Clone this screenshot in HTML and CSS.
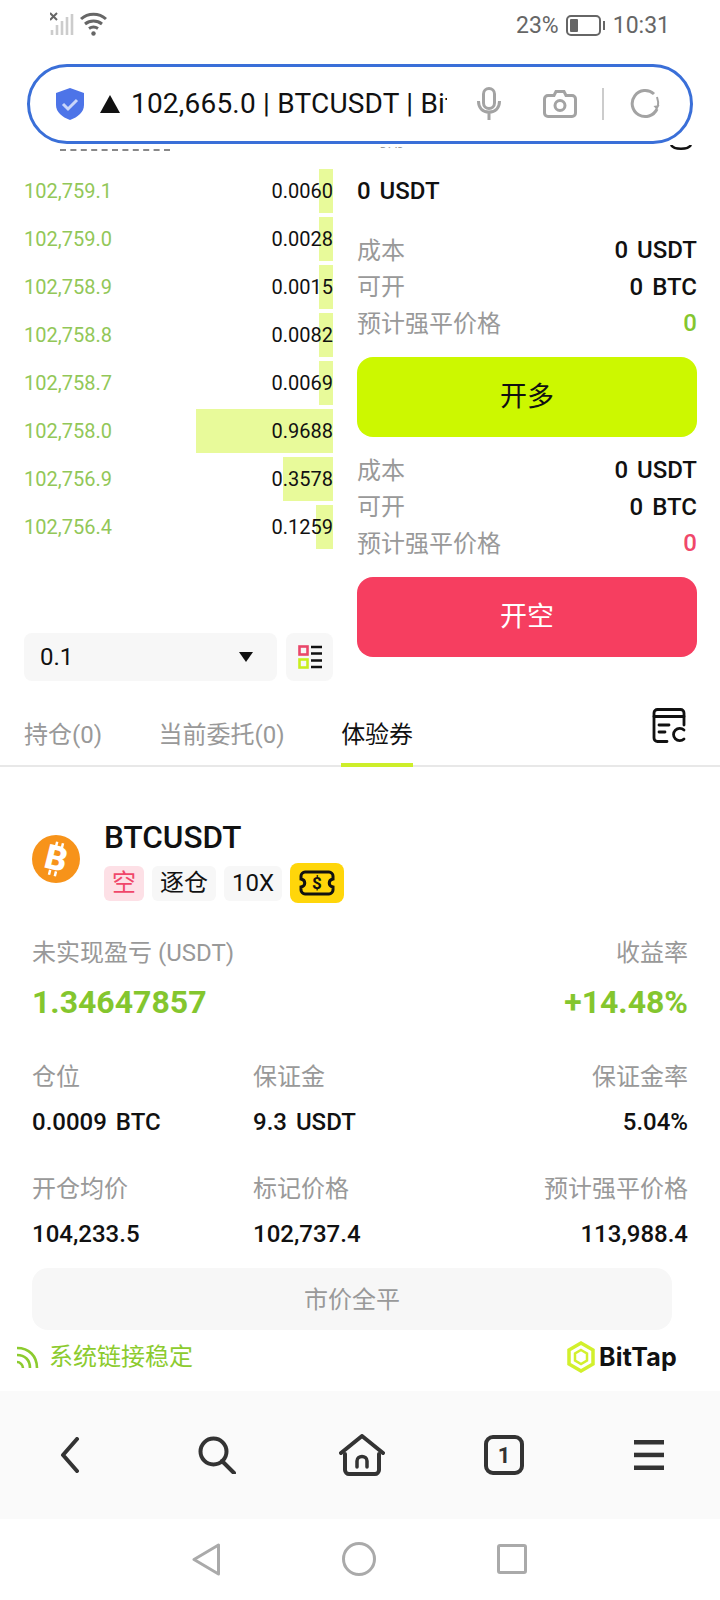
FILE: index.html
```html
<!DOCTYPE html>
<html>
<head>
<meta charset="utf-8">
<title>BTCUSDT</title>
<link rel="stylesheet" href="styles.css">
</head>
<body>
<div class="status">
  <div class="status-left">
    <svg width="24" height="24" viewBox="0 0 24 24" fill="none"><path d="M0 1l7 7M7 1L0 8" stroke="#666" stroke-width="2"/><path d="M2 23v-5M7 23V13M12 23V9M17 23V5M22 23V2" stroke="#ccc" stroke-width="2.600"/></svg>
    <svg width="27" height="24" viewBox="0 0 27 24" fill="none" stroke="#666" stroke-width="3"><path d="M1 7c7-6.500 18-6.500 25 0"/><path d="M5 12c5-4 12-4 17 0"/><path d="M9 16.500c3-2 6-2 9 0"/><circle cx="13.500" cy="21.500" r="2.200" fill="#666" stroke="none"/></svg>
  </div>
  <div class="status-right">
    <span>23%</span>
    <span class="battery"><span class="battery-fill"></span></span>
    <span class="battery-nub"></span>
    <span class="clock">10:31</span>
  </div>
</div>

<div class="urlbar">
  <svg class="shield" width="32" height="32" viewBox="0 0 32 32"><path d="M16 0l14 5v12c0 7-6 12-14 15C8 29 2 24 2 17V5z" fill="#4d74e8"/><path d="M9 16l5 5 9-9" fill="none" stroke="#c9d6fa" stroke-width="3"/></svg>
  <span class="url-tri"></span>
  <div class="url-text">102,665.0 | BTCUSDT | Bittap</div>
  <svg class="mic" width="24" height="34" viewBox="0 0 24 34" fill="none" stroke="#a3a3a3" stroke-width="3"><rect x="6.500" y="1.500" width="11" height="20" rx="5.500"/><path d="M1.500 14c0 7 4 11 10.500 11s10.500-4 10.500-11M12 25v8"/></svg>
  <svg class="cam" width="34" height="28" viewBox="0 0 34 28" fill="none" stroke="#a3a3a3" stroke-width="3"><path d="M5 5.500h6l2-4h8l2 4h6c2 0 3.500 1.500 3.500 3.500v14c0 2-1.500 3.500-3.500 3.500H5c-2 0-3.500-1.500-3.500-3.500V9c0-2 1.500-3.500 3.500-3.500z"/><circle cx="17" cy="15.500" r="5"/></svg>
  <span class="url-sep"></span>
  <svg class="reload" width="30" height="30" viewBox="0 0 30 30" fill="none" stroke="#a3a3a3" stroke-width="3"><path d="M24 5A13 13 0 1 0 27 20"/><path d="M27 8c1 3 1.500 6 1 9" stroke-width="2"/><path d="M29.500 16l-2.500 5-3.500-4z" fill="#a3a3a3" stroke="none"/></svg>
</div>

<div class="clipped">
  <span class="clipped-dash"></span>
  <span class="clipped-text"><span>可用</span></span>
  <svg class="clipped-arc" width="22" height="6" viewBox="0 0 22 6"><path d="M1 0c3 5 17 5 20 0" fill="none" stroke="#111" stroke-width="2.500"/></svg>
</div>

<div class="trade">
  <div class="book">
    <div class="book-row"><span class="bar" style="width:14px"></span><span class="price">102,759.1</span><span class="qty">0.0060</span></div>
    <div class="book-row"><span class="bar" style="width:14px"></span><span class="price">102,759.0</span><span class="qty">0.0028</span></div>
    <div class="book-row"><span class="bar" style="width:14px"></span><span class="price">102,758.9</span><span class="qty">0.0015</span></div>
    <div class="book-row"><span class="bar" style="width:14px"></span><span class="price">102,758.8</span><span class="qty">0.0082</span></div>
    <div class="book-row"><span class="bar" style="width:14px"></span><span class="price">102,758.7</span><span class="qty">0.0069</span></div>
    <div class="book-row"><span class="bar" style="width:137px"></span><span class="price">102,758.0</span><span class="qty">0.9688</span></div>
    <div class="book-row"><span class="bar" style="width:50px"></span><span class="price">102,756.9</span><span class="qty">0.3578</span></div>
    <div class="book-row"><span class="bar" style="width:17px"></span><span class="price">102,756.4</span><span class="qty">0.1259</span></div>
    <div class="depth">
      <div class="depth-select"><span>0.1</span><span class="caret"></span></div>
      <div class="depth-mode">
        <svg width="24" height="24" viewBox="0 0 24 24"><rect x="1.500" y="1.500" width="8" height="8" fill="none" stroke="#e9476a" stroke-width="2.600"/><rect x="1.500" y="14.500" width="8" height="8" fill="none" stroke="#c8ee1e" stroke-width="2.600"/><path d="M13 2h11M13 8.500h11M13 15.500h11M13 22h11" stroke="#111" stroke-width="2.600"/></svg>
      </div>
    </div>
  </div>
  <div class="order">
    <div class="avail">0 USDT</div>
    <div class="info first"><span>成本</span><b>0 USDT</b></div>
    <div class="info"><span>可开</span><b>0 BTC</b></div>
    <div class="info"><span>预计强平价格</span><b class="up">0</b></div>
    <div class="btn btn-long">开多</div>
    <div class="info first"><span>成本</span><b>0 USDT</b></div>
    <div class="info"><span>可开</span><b>0 BTC</b></div>
    <div class="info"><span>预计强平价格</span><b class="down">0</b></div>
    <div class="btn btn-short">开空</div>
  </div>
</div>

<div class="tabs">
  <div class="tab">持仓(0)</div>
  <div class="tab">当前委托(0)</div>
  <div class="tab active">体验券</div>
  <svg class="ledger" width="34" height="35" viewBox="0 0 34 35" fill="none" stroke="#111" stroke-width="2.800" stroke-linecap="round"><path d="M32 17V5c0-2-1.500-3.500-3.500-3.500h-23C3.500 1.500 2 3 2 5v25c0 2 1.500 3.500 3.500 3.500H15"/><path d="M2 8.500h30M7 17h10M7 24h6"/><path d="M32 22a6.200 6.200 0 1 0 0 9"/></svg>
</div>

<div class="pos">
  <div class="pos-head">
    <svg class="coin" width="48" height="48" viewBox="0 0 48 48"><circle cx="24" cy="24" r="24" fill="#f7931a"/><text x="24" y="35" class="coin-b" transform="rotate(14 24 24)">B</text><path d="M21 7v5M27 7v5M21 36v5M27 36v5" stroke="#fff" stroke-width="2.500" transform="rotate(14 24 24)"/></svg>
    <div>
      <div class="pos-name">BTCUSDT</div>
      <div class="tags">
        <span class="tag tag-short">空</span>
        <span class="tag">逐仓</span>
        <span class="tag">10X</span>
        <span class="coupon">
          <svg width="36" height="26" viewBox="0 0 36 26" fill="none" stroke="#111" stroke-width="3"><path d="M6 2h24c2 0 4 2 4 4v3c-5 1-5 7 0 8v3c0 2-2 4-4 4H6c-2 0-4-2-4-4v-3c5-1 5-7 0-8V6c0-2 2-4 4-4z"/><text x="18" y="19" class="coupon-sign">$</text></svg>
        </span>
      </div>
    </div>
  </div>

  <div class="pnl-labels"><span>未实现盈亏 (USDT)</span><span>收益率</span></div>
  <div class="pnl-values"><span>1.34647857</span><span>+14.48%</span></div>

  <div class="stats">
    <div class="stat"><span>仓位</span><b>0.0009 BTC</b></div>
    <div class="stat"><span>保证金</span><b>9.3 USDT</b></div>
    <div class="stat end"><span>保证金率</span><b>5.04%</b></div>
    <div class="stat"><span>开仓均价</span><b>104,233.5</b></div>
    <div class="stat"><span>标记价格</span><b>102,737.4</b></div>
    <div class="stat end"><span>预计强平价格</span><b>113,988.4</b></div>
  </div>

  <div class="close-all">市价全平</div>
</div>

<div class="netline">
  <div class="net">
    <svg width="22" height="22" viewBox="0 0 22 22" fill="none" stroke="#8ccb2e" stroke-width="2.600"><path d="M0 2c12 0 20 8 20 20M0 9c8 0 13 5 13 13M0 16c3 0 6 3 6 6"/></svg>
    <span>系统链接稳定</span>
  </div>
  <div class="brand">
    <svg width="28" height="32" viewBox="0 0 28 32" fill="none" stroke="#d2f02c" stroke-width="3.500"><path d="M14 2l12 7v14l-12 7-12-7V9z"/><path d="M14 9l6 3.500v7L14 23l-6-3.500v-7z" stroke-width="2.500"/></svg>
    <span>BitTap</span>
  </div>
</div>

<div class="browser">
  <svg class="nav-back" width="20" height="36" viewBox="0 0 20 36" fill="none" stroke="#333" stroke-width="4" stroke-linecap="round" stroke-linejoin="round"><path d="M17 2L3 18l14 16"/></svg>
  <svg class="nav-search" width="38" height="38" viewBox="0 0 38 38" fill="none" stroke="#333" stroke-width="4"><circle cx="15.500" cy="15.500" r="13"/><path d="M24 25l12 12" stroke-linecap="round"/></svg>
  <svg class="nav-home" width="46" height="42" viewBox="0 0 46 42" fill="none" stroke="#333" stroke-width="4" stroke-linecap="round" stroke-linejoin="round"><path d="M2 19L23 2l21 17"/><path d="M6 20v16c0 2 2 4 4 4h26c2 0 4-2 4-4V20"/><path d="M18 33v-6c0-6 10-6 10 0v6" stroke-width="3.500"/></svg>
  <span class="tab-count">1</span>
  <svg class="nav-menu" width="30" height="30" viewBox="0 0 30 30" fill="#333"><rect width="30" height="4.500"/><rect y="12.700" width="30" height="4.500"/><rect y="25.500" width="30" height="4.500"/></svg>
</div>

<div class="sysnav">
  <svg width="28" height="33" viewBox="0 0 28 33" fill="none" stroke="#aaa" stroke-width="3" stroke-linejoin="round"><path d="M26.500 2v29L2 16.500z"/></svg>
  <svg width="34" height="34" viewBox="0 0 34 34" fill="none" stroke="#aaa" stroke-width="3"><circle cx="17" cy="17" r="15.500"/></svg>
  <svg width="30" height="30" viewBox="0 0 30 30" fill="none" stroke="#aaa" stroke-width="3" stroke-linejoin="round"><rect x="1.500" y="1.500" width="27" height="27" rx="1.500"/></svg>
</div>
</body>
</html>
```

FILE: styles.css
```css
* {
    box-sizing: border-box;
}

html, body {
    margin: 0;
    padding: 0;
}

body {
    width: 720px;
    height: 1600px;
    overflow: hidden;
    background: #fff;
    color: #111;
    font-family: Roboto, "Noto Sans CJK SC", sans-serif;
}

b {
    font-weight: 500;
    word-spacing: 3px;
}

/* status bar */
.status {
    height: 64px;
    padding: 12px 50px 0 50px;
    display: flex;
    justify-content: space-between;
}

.status-left {
    display: flex;
    gap: 6px;
    height: 24px;
}

.status-right {
    display: flex;
    align-items: center;
    height: 26px;
    font-size: 23px;
    color: #666;
}

.battery {
    margin-left: 7px;
    width: 35px;
    height: 21px;
    border: 2px solid #666;
    border-radius: 5px;
    padding: 2px;
}

.battery-fill {
    display: block;
    width: 8px;
    height: 100%;
    background: #666;
    border-radius: 1px;
}

.battery-nub {
    margin-left: 2px;
    width: 2px;
    height: 9px;
    background: #666;
}

.clock {
    margin-left: 8px;
}

/* address bar */
.urlbar {
    margin: 0 27px;
    height: 80px;
    border: 3px solid #3a6fd8;
    border-radius: 40px;
    display: flex;
    align-items: center;
    padding-left: 24px;
}

.shield {
    flex: none;
}

.url-tri {
    flex: none;
    margin-left: 14px;
    width: 0;
    height: 0;
    border-left: 10.500px solid transparent;
    border-right: 10.500px solid transparent;
    border-bottom: 18px solid #111;
}

.url-text {
    margin-left: 11px;
    width: 316px;
    overflow: hidden;
    white-space: nowrap;
    font-size: 28px;
    letter-spacing: 0.2px;
    line-height: 36px;
    flex: none;
}

.mic {
    flex: none;
    margin-left: 30px;
}

.cam {
    flex: none;
    margin-left: 42px;
}

.url-sep {
    flex: none;
    margin-left: 25px;
    width: 2px;
    height: 32px;
    background: #ccc;
}

.reload {
    flex: none;
    margin-left: 26px;
}

/* scrolled-away row under the bar */
.clipped {
    height: 9px;
    position: relative;
    overflow: hidden;
}

.clipped-dash {
    position: absolute;
    left: 60px;
    top: 5px;
    width: 110px;
    border-top: 2px dashed #888;
}

.clipped-text {
    position: absolute;
    left: 372px;
    top: 3px;
    height: 4px;
    overflow: hidden;
    font-size: 16px;
    color: #999;
}

.clipped-text span {
    display: block;
    margin-top: -18px;
    line-height: 24px;
}

.clipped-arc {
    position: absolute;
    left: 670px;
    top: 1px;
}

/* order book + order form */
.trade {
    display: flex;
    height: 528px;
    padding: 16px 23px 0 24px;
}

.book {
    width: 309px;
    flex: none;
}

.book-row {
    position: relative;
    height: 44px;
    margin-bottom: 4px;
    display: flex;
    align-items: center;
    justify-content: space-between;
    font-size: 20px;
}

.bar {
    position: absolute;
    right: 0;
    top: 0;
    bottom: 0;
    background: #e8fa9a;
}

.price {
    position: relative;
    color: #92c758;
}

.qty {
    position: relative;
}

.depth {
    margin-top: 84px;
    display: flex;
    gap: 9px;
}

.depth-select {
    width: 253px;
    height: 48px;
    padding: 0 24px 0 16px;
    background: #f7f7f7;
    border-radius: 8px;
    display: flex;
    align-items: center;
    justify-content: space-between;
    font-size: 24px;
}

.caret {
    width: 0;
    height: 0;
    border-left: 7px solid transparent;
    border-right: 7px solid transparent;
    border-top: 10px solid #111;
}

.depth-mode {
    width: 47px;
    height: 48px;
    background: #f7f7f7;
    border-radius: 8px;
    display: flex;
    align-items: center;
    justify-content: center;
}

.order {
    margin-left: 24px;
    width: 340px;
    flex: none;
}

.avail {
    height: 44px;
    line-height: 44px;
    font-size: 24px;
    font-weight: 500;
    word-spacing: 3px;
}

.info {
    height: 36.500px;
    display: flex;
    align-items: center;
    justify-content: space-between;
    font-size: 24px;
    color: #999;
}

.info span {
    padding-bottom: 4px;
}

.info b {
    color: #111;
}

.info.first {
    margin-top: 19px;
}

.btn + .info.first {
    margin-top: 15px;
}

.info b.up {
    color: #84c62e;
}

.info b.down {
    color: #f0476a;
}

.btn {
    margin-top: 15.500px;
    height: 80px;
    padding-bottom: 5px;
    border-radius: 16px;
    display: flex;
    align-items: center;
    justify-content: center;
    font-size: 27px;
}

.btn-long {
    background: #ccf800;
}

.btn-short {
    background: #f63e60;
    color: #fff;
}

/* tabs */
.tabs {
    position: relative;
    height: 86px;
    padding-left: 24px;
    display: flex;
    align-items: flex-end;
    gap: 56.500px;
    border-bottom: 2px solid #e8e8e8;
}

.tab {
    height: 52px;
    margin-bottom: -2px;
    line-height: 40px;
    font-size: 24px;
    color: #999;
    border-bottom: 4px solid transparent;
}

.tab.active {
    color: #111;
    border-bottom-color: #cdee2a;
}

.ledger {
    position: absolute;
    left: 652px;
    top: 27px;
}

/* position card */
.pos {
    height: 563px;
    padding: 53px 32px 0;
}

.pos-head {
    display: flex;
    gap: 24px;
}

.coin {
    flex: none;
    margin-top: 15px;
}

.coin-b {
    font-family: Roboto, sans-serif;
    font-size: 34px;
    font-weight: 900;
    fill: #fff;
    text-anchor: middle;
}

.pos-name {
    height: 38px;
    line-height: 36px;
    font-size: 31.500px;
    font-weight: 500;
}

.tags {
    margin-top: 5px;
    display: flex;
    gap: 8px;
    align-items: center;
}

.tag {
    height: 35px;
    padding: 0 8px;
    background: #f7f7f7;
    border-radius: 6px;
    line-height: 35px;
    font-size: 24px;
}

.tag-short {
    background: #fde0e6;
    color: #f0476a;
}

.coupon {
    width: 54px;
    height: 40px;
    background: #ffd60a;
    border-radius: 8px;
    display: flex;
    align-items: center;
    justify-content: center;
}

.coupon-sign {
    font-family: Roboto, sans-serif;
    font-size: 17px;
    font-weight: 700;
    fill: #111;
    stroke: none;
    text-anchor: middle;
}

.pnl-labels {
    margin-top: 29px;
    height: 36px;
    display: flex;
    justify-content: space-between;
    align-items: center;
    font-size: 24px;
    color: #999;
}

.pnl-values {
    margin-top: 12px;
    height: 44px;
    display: flex;
    justify-content: space-between;
    align-items: center;
    font-size: 32px;
    font-weight: 700;
    color: #84c62e;
}

.stats {
    margin-top: 35px;
    display: grid;
    grid-template-columns: 221px 1fr auto;
    row-gap: 31px;
}

.stat {
    display: flex;
    flex-direction: column;
    gap: 9px;
}

.stat.end {
    align-items: flex-end;
}

.stat span {
    height: 36px;
    line-height: 36px;
    font-size: 24px;
    color: #999;
}

.stat b {
    height: 36px;
    line-height: 36px;
    font-size: 24px;
}

.close-all {
    margin-top: 16px;
    width: 640px;
    height: 62px;
    padding-bottom: 4px;
    border-radius: 16px;
    background: #f7f7f7;
    display: flex;
    align-items: center;
    justify-content: center;
    font-size: 24px;
    color: #999;
}

/* connection line */
.netline {
    height: 62px;
    margin-top: -1px;
    padding: 0 43px 6px 17px;
    display: flex;
    align-items: center;
    justify-content: space-between;
}

.net {
    display: flex;
    align-items: center;
    gap: 10px;
    font-size: 24px;
    line-height: 30px;
    color: #8ccb2e;
}

.brand {
    display: flex;
    align-items: center;
    gap: 4px;
    font-family: Inter, sans-serif;
    font-size: 25px;
    font-weight: 700;
    letter-spacing: 0.2px;
}

/* browser toolbar */
.browser {
    height: 128px;
    background: #fafafa;
    padding-left: 60px;
    display: flex;
    align-items: center;
}

.nav-search {
    margin-left: 118px;
}

.nav-home {
    margin-left: 103px;
}

.tab-count {
    margin-left: 99px;
    width: 40px;
    height: 40px;
    border: 4px solid #333;
    border-radius: 9px;
    display: flex;
    align-items: center;
    justify-content: center;
    font-size: 22px;
    font-weight: 700;
    color: #333;
}

.nav-menu {
    margin-left: 110px;
}

/* android nav */
.sysnav {
    height: 80px;
    padding: 0 193px 0 192px;
    display: flex;
    align-items: center;
    justify-content: space-between;
}
```
